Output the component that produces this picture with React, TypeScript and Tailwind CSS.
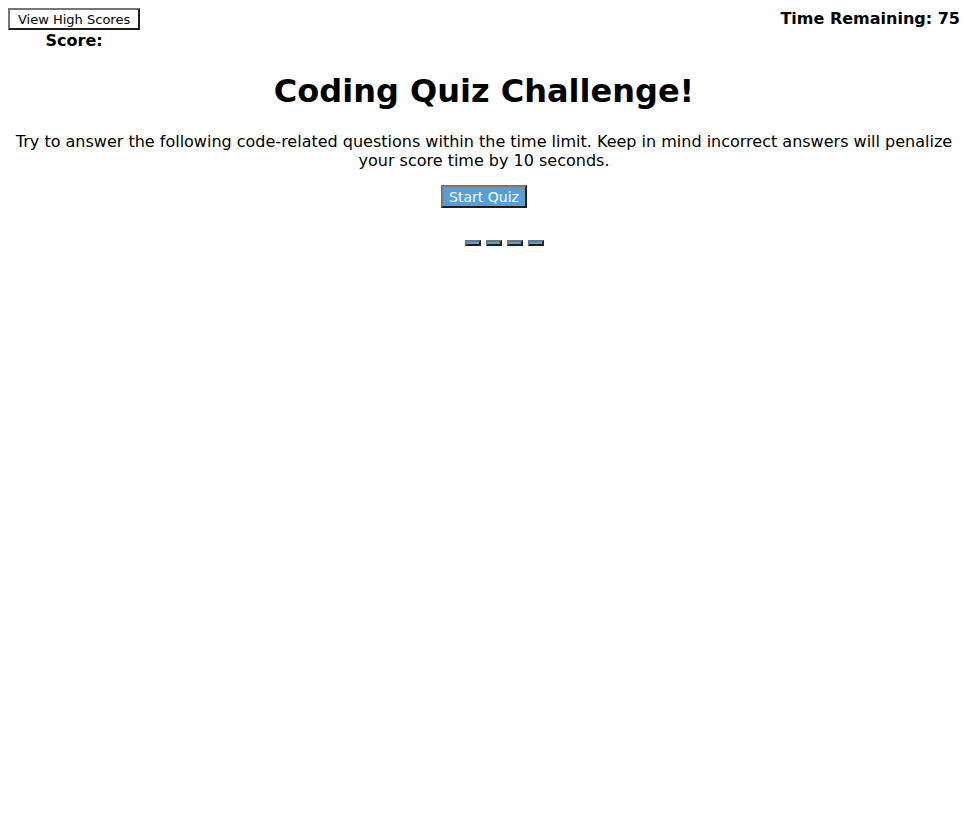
import React from 'react';

const btnBorder =
  'border-2 border-t-[#767676] border-l-[#767676] border-b-[#1f1f1f] border-r-[#1f1f1f]';

const App = () => {
  return (
    <div className="min-h-screen bg-white text-black px-2 pt-2 font-['DejaVu_Sans',Verdana,sans-serif]">
      <header className="flex justify-between items-start">
        <div className="flex flex-col items-center">
          <button className={`h-[22px] px-[8px] bg-white text-[13px] leading-none ${btnBorder}`}>
            View High Scores
          </button>
          <span className="font-bold text-base leading-[19px] mt-[1px]">Score:</span>
        </div>
        <div className="font-bold text-base leading-[19px] pt-[1px]">Time Remaining: 75</div>
      </header>

      <main className="flex flex-col items-center">
        <h1 className="text-[32px] font-bold leading-[37px] mt-[23px] text-center">
          Coding Quiz Challenge!
        </h1>
        <p className="text-base leading-[19px] text-center mt-[22px] px-1">
          Try to answer the following code-related questions within the time limit. Keep in mind
          incorrect answers will penalize your score time by 10 seconds.
        </p>
        <button
          className={`mt-[15px] h-[23px] px-[6px] bg-[#569fd5] text-white text-[14px] leading-none ${btnBorder}`}
        >
          Start Quiz
        </button>
        <ul className="flex gap-[5px] pl-10 mt-[32px]">
          {[0, 1, 2, 3].map((i) => (
            <li key={i}>
              <button className={`block w-4 h-[6px] bg-[#569fd5] ${btnBorder}`} />
            </li>
          ))}
        </ul>
      </main>
    </div>
  );
};

export default App;
